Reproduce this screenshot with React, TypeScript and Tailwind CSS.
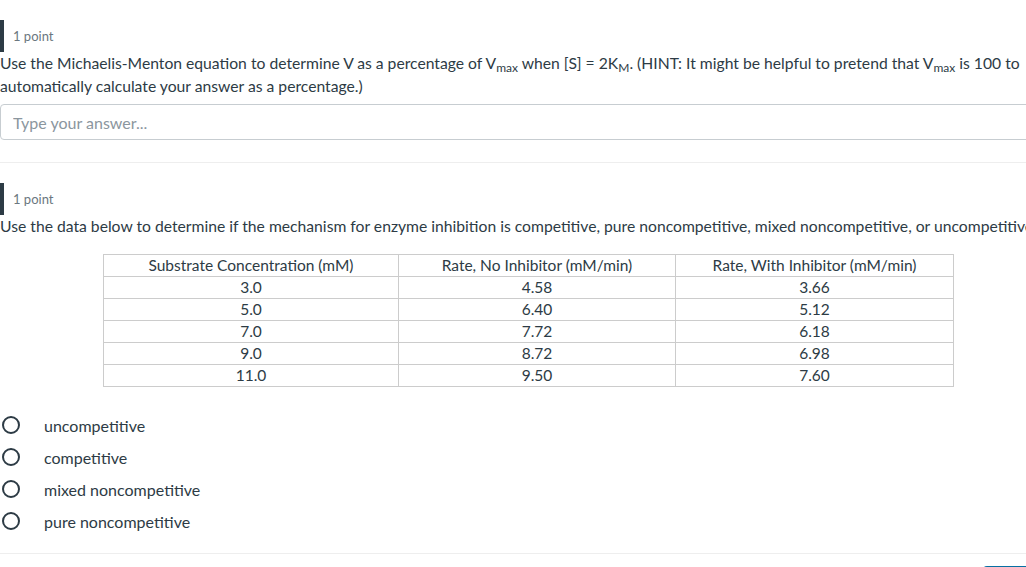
const rows = [
  ['3.0', '4.58', '3.66'],
  ['5.0', '6.40', '5.12'],
  ['7.0', '7.72', '6.18'],
  ['9.0', '8.72', '6.98'],
  ['11.0', '9.50', '7.60'],
];

const options = ['uncompetitive', 'competitive', 'mixed noncompetitive', 'pure noncompetitive'];

function PointLabel() {
  return (
    <div className="flex h-8 items-center border-l-4 border-[#2d3b45] pl-[9px] text-[13px] text-[#6b7780]">
      1 point
    </div>
  );
}

export default function App() {
  return (
    <div className="h-[567px] w-full overflow-hidden bg-white">
      <div
        className="w-[1070px] pt-5 text-[15.7px] leading-[23px] text-[#2d3b45]"
        style={{ fontFamily: 'Lato, "Open Sans", sans-serif' }}
      >
        {/* question 1 */}
        <PointLabel />
        <p>
          Use the Michaelis-Menton equation to determine V as a percentage of V
          <sub className="text-[12px]">max</sub> when [S] = 2K<sub className="text-[12px]">M</sub>. (HINT: It
          might be helpful to pretend that V<sub className="text-[12px]">max</sub> is 100 to automatically
          calculate your answer as a percentage.)
        </p>
        <input
          type="text"
          placeholder="Type your answer..."
          className="mt-[6px] block h-9 w-full rounded border border-[#c7cdd1] px-3 text-[16px] text-[#2d3b45] placeholder:text-[#8b969e] focus:outline-none"
        />

        <div className="mt-[22px] border-t border-[#eeeeee]" />

        {/* question 2 */}
        <div className="pt-5">
          <PointLabel />
          <p>
            Use the data below to determine if the mechanism for enzyme inhibition is competitive, pure
            noncompetitive, mixed noncompetitive, or uncompetitive.
          </p>
          <table className="mt-4 ml-[103px] w-[851px] border-collapse border border-[#333] text-center text-[15.5px] leading-[21px]">
            <thead>
              <tr>
                <th className="w-[295px] border border-[#ccc] font-normal">Substrate Concentration (mM)</th>
                <th className="w-[277px] border border-[#ccc] font-normal">Rate, No Inhibitor (mM/min)</th>
                <th className="border border-[#ccc] font-normal">Rate, With Inhibitor (mM/min)</th>
              </tr>
            </thead>
            <tbody>
              {rows.map((r) => (
                <tr key={r[0]}>
                  {r.map((c, i) => (
                    <td key={i} className="border border-[#ccc]">
                      {c}
                    </td>
                  ))}
                </tr>
              ))}
            </tbody>
          </table>

          <div className="mt-[29px] flex flex-col gap-[14px]">
            {options.map((o) => (
              <label key={o} className="flex h-[18px] items-center text-[16px]">
                <span className="ml-[2px] h-[18px] w-[18px] rounded-full border-2 border-[#2d3b45]" />
                <span className="ml-6">{o}</span>
              </label>
            ))}
          </div>
        </div>

        <div className="mt-[23px] border-t border-[#eeeeee]" />
        <div className="flex pt-3">
          <button className="ml-[983px] h-9 w-20 rounded-t bg-[#0770a3]" />
        </div>
      </div>
    </div>
  );
}
